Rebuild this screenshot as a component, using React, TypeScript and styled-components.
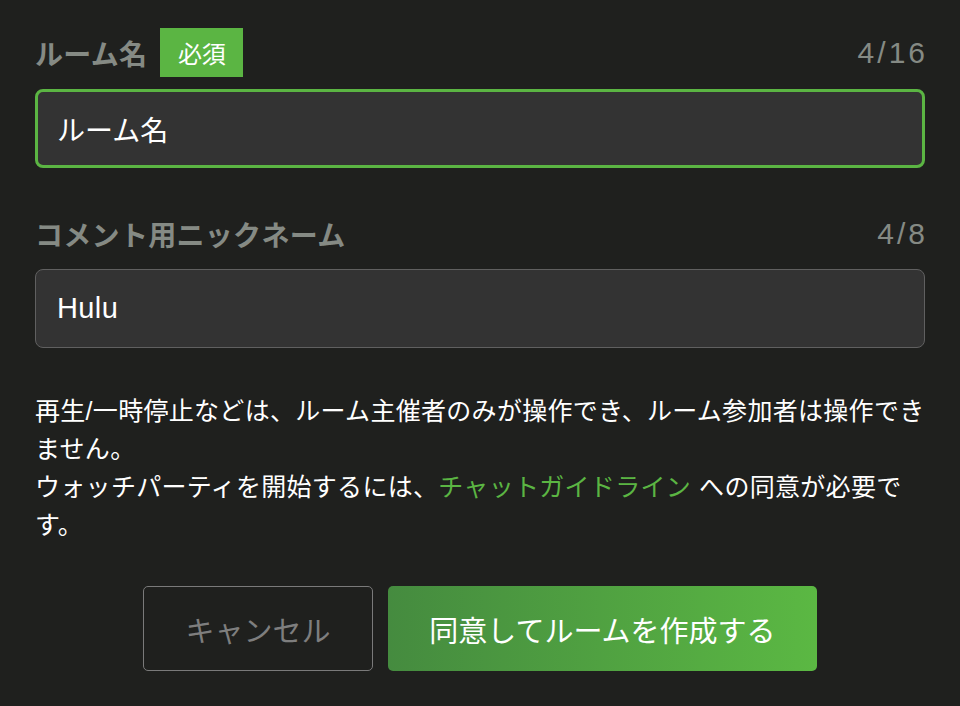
import styled, { createGlobalStyle, css } from "styled-components";

const GlobalStyle = createGlobalStyle`
  html, body {
    margin: 0;
    padding: 0;
    background-color: #1f201e;
  }
  body {
    font-family: "Liberation Sans", "Noto Sans CJK JP", sans-serif;
    -webkit-font-smoothing: antialiased;
  }
`;

const colors = {
  green: "#5bb543",
  gray: "#858a84",
  field: "#333333",
  white: "#ffffff",
};

const Page = styled.div`
  width: 960px;
  height: 706px;
  box-sizing: border-box;
  padding: 28px 35px 0 35px;
  display: flex;
  flex-direction: column;
`;

const Field = styled.div<{ $gap: number }>`
  display: flex;
  flex-direction: column;
  gap: ${(p) => p.$gap}px;
  margin-bottom: 41px;
`;

const LabelRow = styled.div`
  display: flex;
  align-items: center;
  justify-content: space-between;
  height: 49px;
`;

const LabelGroup = styled.div`
  display: flex;
  align-items: center;
  gap: 13px;
`;

const Label = styled.span`
  font-size: 28px;
  font-weight: bold;
  color: ${colors.gray};
  letter-spacing: 0.3px;
`;

const Badge = styled.span`
  display: flex;
  align-items: center;
  justify-content: center;
  width: 83px;
  height: 49px;
  background-color: ${colors.green};
  color: ${colors.white};
  font-size: 24px;
`;

const Counter = styled.span`
  font-size: 30px;
  color: ${colors.gray};
  letter-spacing: 3px;
  margin-right: -3px;
`;

const Input = styled.div<{ $active?: boolean }>`
  box-sizing: border-box;
  height: 79px;
  display: flex;
  align-items: center;
  background-color: ${colors.field};
  border-radius: 8px;
  font-size: 28px;
  color: ${colors.white};
  ${(p) =>
    p.$active
      ? css`
          border: 3px solid ${colors.green};
          padding: 0 19px;
        `
      : css`
          border: 1px solid #606060;
          padding: 0 21px;
          font-size: 29px;
          letter-spacing: 0.4px;
        `}
`;

const Notice = styled.p`
  margin: 3px 0 0 0;
  font-size: 25px;
  letter-spacing: 0.3px;
  line-height: 38px;
  color: ${colors.white};
`;

const Link = styled.span`
  color: ${colors.green};
  margin-right: 8px;
`;

const Actions = styled.div`
  display: flex;
  justify-content: center;
  gap: 15px;
  margin-top: 42px;
`;

const buttonBase = css`
  box-sizing: border-box;
  height: 85px;
  border-radius: 5px;
  font-family: "Liberation Sans", "Noto Sans CJK JP", sans-serif;
  font-size: 29px;
  display: flex;
  align-items: center;
  justify-content: center;
  cursor: pointer;
`;

const CancelButton = styled.button`
  ${buttonBase}
  width: 230px;
  background: transparent;
  border: 1.5px solid #7a7a7a;
  color: #7e7e7e;
`;

const SubmitButton = styled.button`
  ${buttonBase}
  width: 429px;
  border: none;
  background: linear-gradient(90deg, #458b3f 0%, #5bb843 100%);
  color: ${colors.white};
`;

export default function App() {
  return (
    <>
      <GlobalStyle />
      <Page>
        <Field $gap={12}>
          <LabelRow>
            <LabelGroup>
              <Label>ルーム名</Label>
              <Badge>必須</Badge>
            </LabelGroup>
            <Counter>4/16</Counter>
          </LabelRow>
          <Input $active>ルーム名</Input>
        </Field>
        <Field $gap={11}>
          <LabelRow>
            <Label>コメント用ニックネーム</Label>
            <Counter>4/8</Counter>
          </LabelRow>
          <Input>Hulu</Input>
        </Field>
        <Notice>
          再生/一時停止などは、ルーム主催者のみが操作でき、ルーム参加者は操作できません。
          <br />
          ウォッチパーティを開始するには、<Link>チャットガイドライン</Link>への同意が必要です。
        </Notice>
        <Actions>
          <CancelButton>キャンセル</CancelButton>
          <SubmitButton>同意してルームを作成する</SubmitButton>
        </Actions>
      </Page>
    </>
  );
}
